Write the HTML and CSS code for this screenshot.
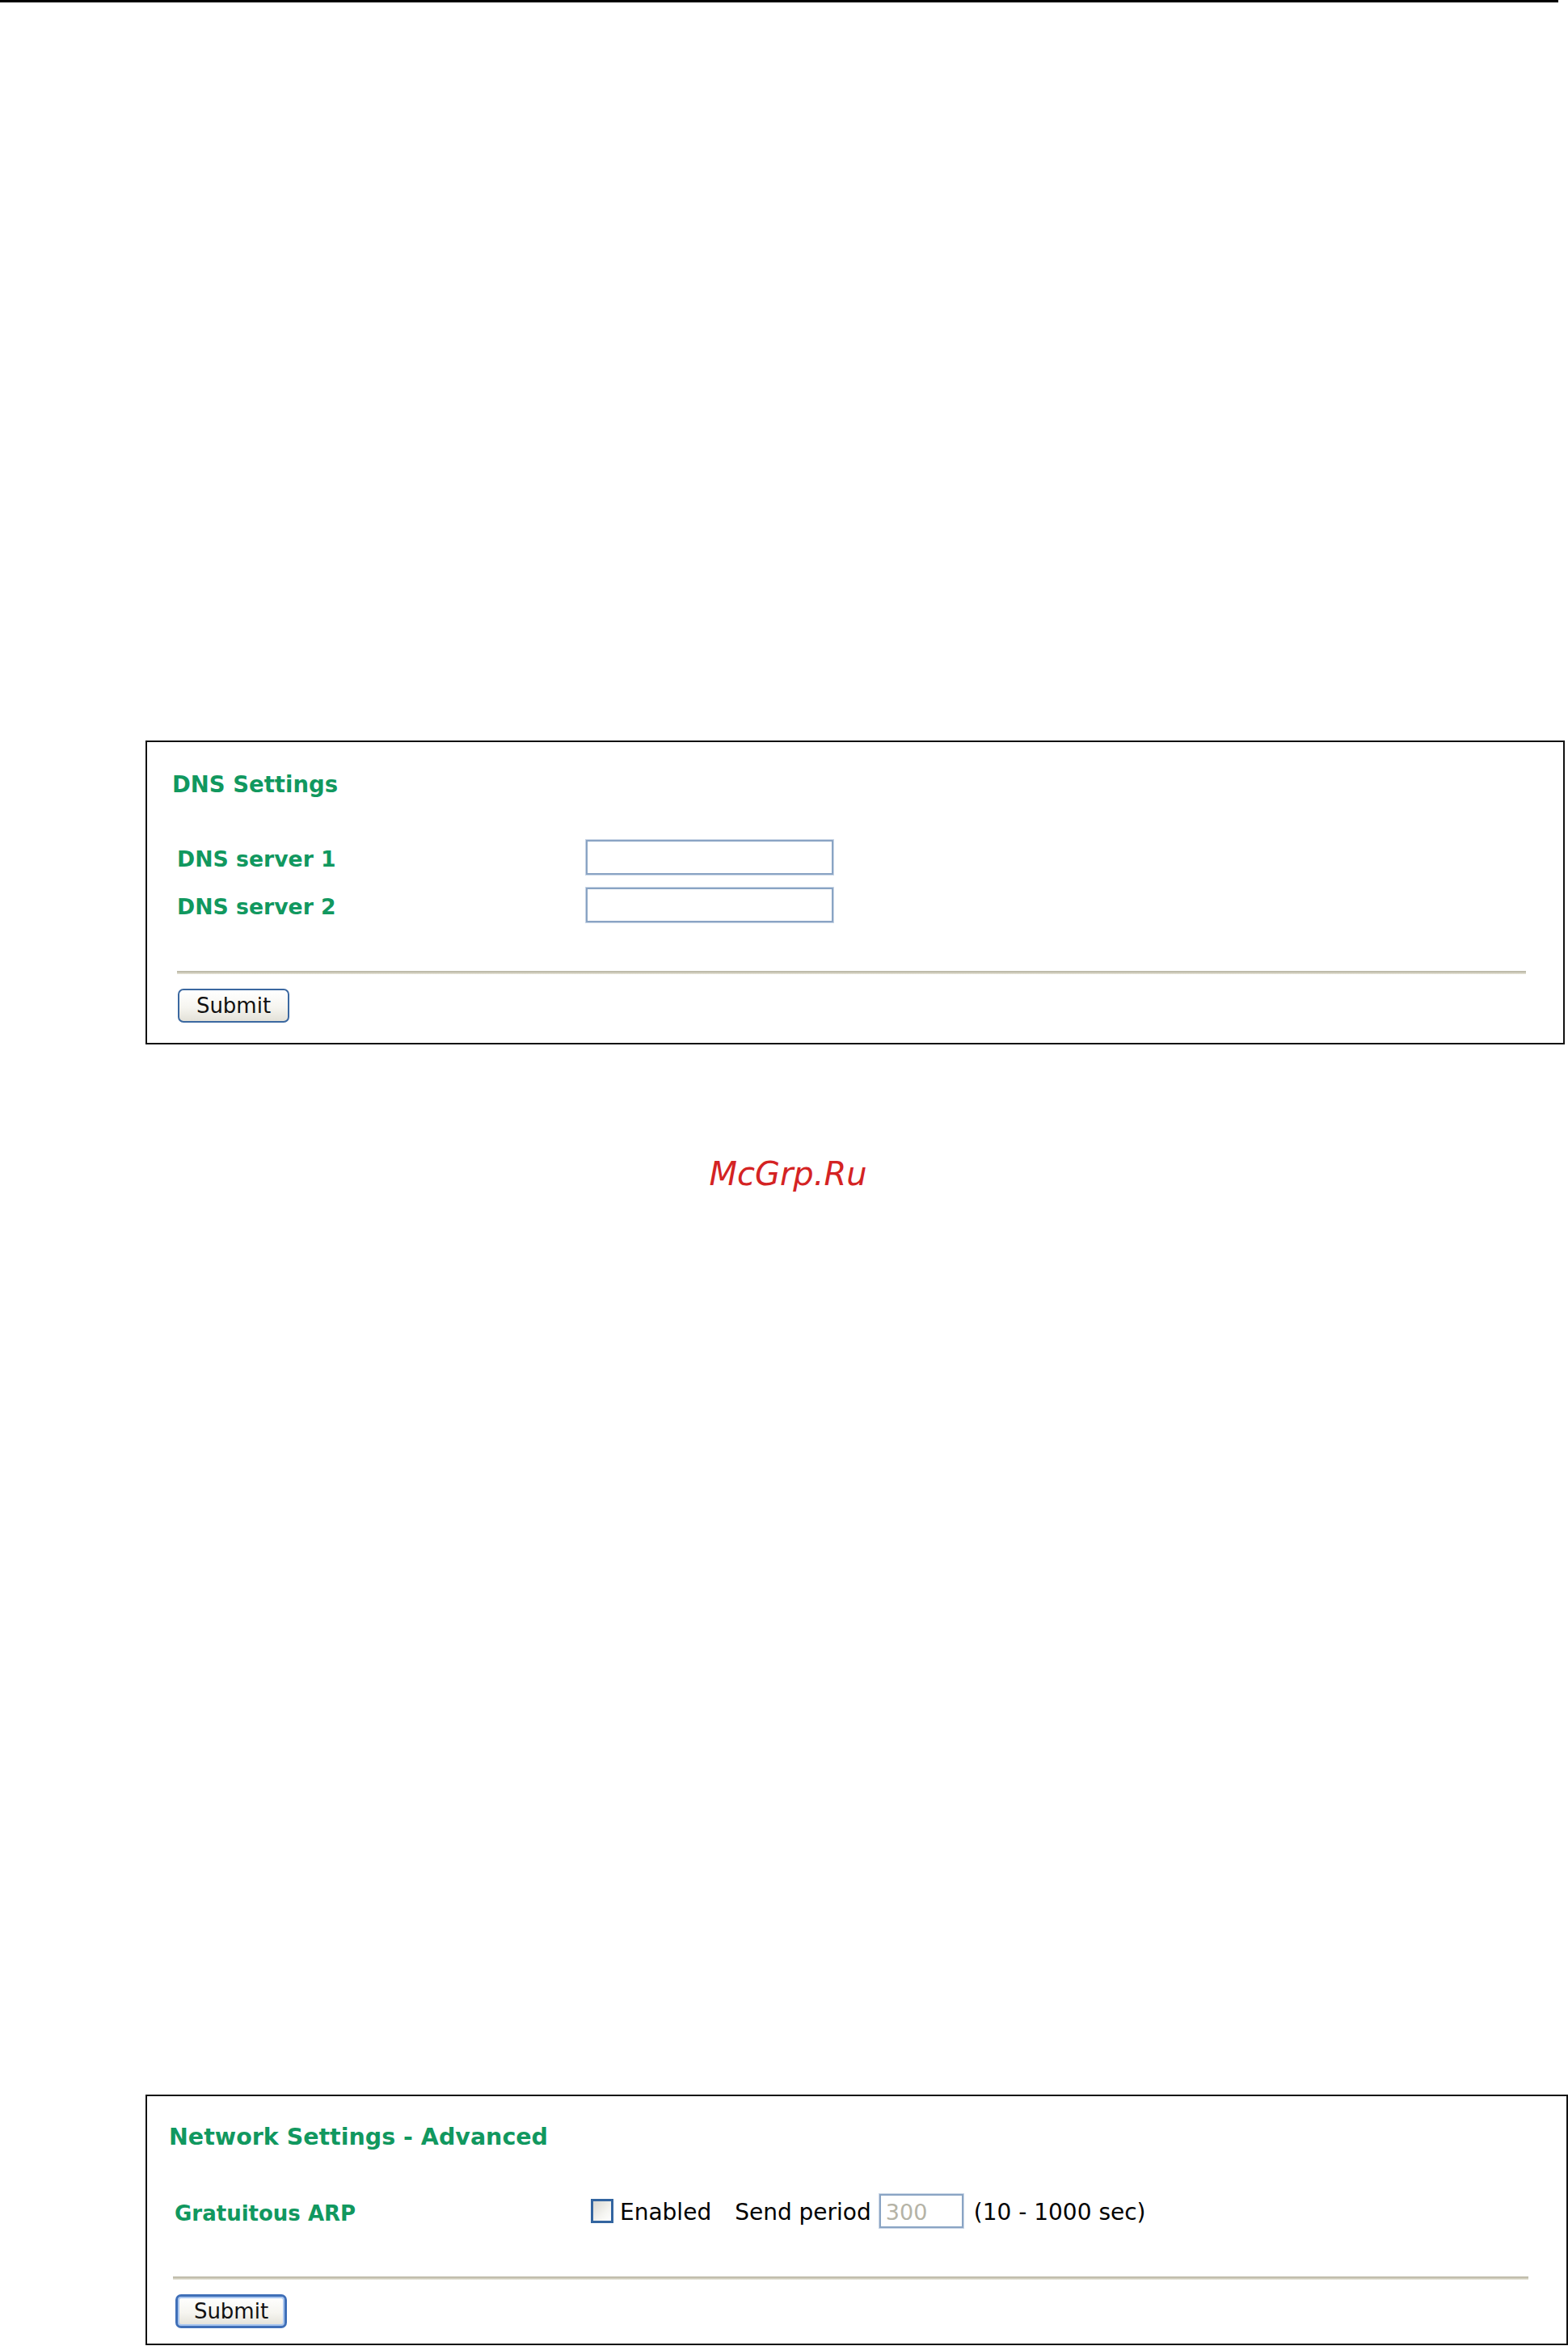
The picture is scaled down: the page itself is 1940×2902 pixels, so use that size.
FILE: index.html
```html
<!DOCTYPE html>
<html lang="en">
<head>
<meta charset="utf-8">
<title>DNS Settings</title>
<link rel="stylesheet" href="styles.css">
</head>
<body>
<div class="top-rule"></div>

<form class="panel panel-dns">
  <div class="panel-title">DNS Settings</div>
  <div class="rows">
    <div class="row">
      <label class="row-label">DNS server 1</label>
      <div class="row-value"><input class="text-in dns-in" type="text"></div>
    </div>
    <div class="row">
      <label class="row-label">DNS server 2</label>
      <div class="row-value"><input class="text-in dns-in" type="text"></div>
    </div>
  </div>
  <div class="sep"></div>
  <button type="button" class="btn">Submit</button>
</form>

<div class="watermark">McGrp.Ru</div>

<form class="panel panel-adv">
  <div class="panel-title">Network Settings - Advanced</div>
  <div class="rows">
    <div class="row">
      <label class="row-label">Gratuitous ARP</label>
      <div class="row-value">
        <span class="checkbox"></span>
        <span class="txt txt-enabled">Enabled</span>
        <span class="txt txt-send">Send period</span>
        <span class="text-in period-in">300</span>
        <span class="txt txt-range">(10 - 1000 sec)</span>
      </div>
    </div>
  </div>
  <div class="sep"></div>
  <button type="button" class="btn btn-default">Submit</button>
</form>
</body>
</html>
```

FILE: styles.css
```css
html, body {
  margin: 0;
  padding: 0;
  background: #ffffff;
}
body {
  font-family: "DejaVu Sans", Verdana, sans-serif;
  color: #000;
  overflow: hidden;
}

.top-rule {
  width: 1928px;
  height: 3px;
  background: #000;
}

.panel {
  box-sizing: border-box;
  margin-left: 180px;
  border: 2px solid #111;
  display: flex;
  flex-direction: column;
  align-items: flex-start;
}
.panel-dns {
  margin-top: 913px;
  width: 1756px;
  height: 376px;
  padding: 35px 0 0 31px;
}
.panel-adv {
  margin-top: 1115px;
  width: 1760px;
  height: 310px;
  padding: 34px 0 0 27px;
}

.panel-title {
  font-weight: bold;
  font-size: 28.5px;
  line-height: 34px;
  height: 34px;
  color: #11985f;
  white-space: nowrap;
}
.panel-dns .panel-title { font-size: 27.5px; }

.rows {
  display: flex;
  flex-direction: column;
  gap: 14px;
}
.panel-dns .rows { margin: 51px 0 0 6px; }
.panel-adv .rows { margin: 52px 0 0 7px; }

.row {
  display: flex;
  align-items: center;
  height: 45px;
}
.panel-adv .row { height: 44px; }

.row-label {
  font-weight: bold;
  font-size: 26.7px;
  line-height: 30px;
  color: #11985f;
  padding-top: 5px;
  white-space: nowrap;
}
.panel-dns .row-label { width: 505px; }
.panel-adv .row-label { width: 515px; font-size: 26px; }

.row-value {
  display: flex;
  align-items: center;
}

.text-in {
  box-sizing: border-box;
  border: 2px solid #8aa4c4;
  box-shadow: 0 0 0 1px #c9d6e6;
  background: #fff;
  margin: 1px;
  padding: 0;
  outline: none;
}
.dns-in {
  width: 306px;
  height: 43px;
}
.period-in {
  display: flex;
  align-items: center;
  width: 104px;
  height: 42px;
  margin-left: 10px;
  padding: 2px 0 0 6px;
  font-size: 27px;
  color: #b5b3a6;
}

.checkbox {
  box-sizing: border-box;
  width: 28px;
  height: 30px;
  border: 3px solid #3365a0;
  background: linear-gradient(135deg, #d9d8d1 0%, #f4f4f0 60%, #ffffff 100%);
}

.txt {
  font-size: 28px;
  line-height: 32px;
  padding-top: 4px;
  white-space: nowrap;
}
.txt-enabled { margin-left: 8px; }
.txt-send { margin-left: 29px; }
.txt-range { margin-left: 12px; }

.sep {
  height: 4px;
  background: linear-gradient(#b7b3a1 0%, #c9c6b5 50%, #ebe8dc 100%);
}
.panel-dns .sep {
  width: 1669px;
  margin: 59px 0 0 6px;
}
.panel-adv .sep {
  width: 1677px;
  margin: 59px 0 0 5px;
}

.btn {
  box-sizing: border-box;
  width: 138px;
  height: 42px;
  border: 2px solid #3b68a0;
  border-radius: 7px;
  background: linear-gradient(#ffffff 0%, #f6f5f0 55%, #e3e1d8 100%);
  font-family: "DejaVu Sans", Verdana, sans-serif;
  font-size: 26px;
  line-height: 34px;
  color: #111;
  padding: 0;
  display: flex;
  align-items: center;
  justify-content: center;
}
.panel-dns .btn { margin: 18px 0 0 7px; }
.panel-adv .btn {
  margin: 18px 0 0 8px;
}
.btn-default {
  border: 3px solid #3f6fb8;
  box-shadow: inset 0 0 0 2px #a9c6ef;
}

.watermark {
  margin-top: 136px;
  height: 48px;
  line-height: 48px;
  text-align: center;
  padding-left: 10px;
  font-style: italic;
  font-size: 40px;
  color: #d42323;
}
```
